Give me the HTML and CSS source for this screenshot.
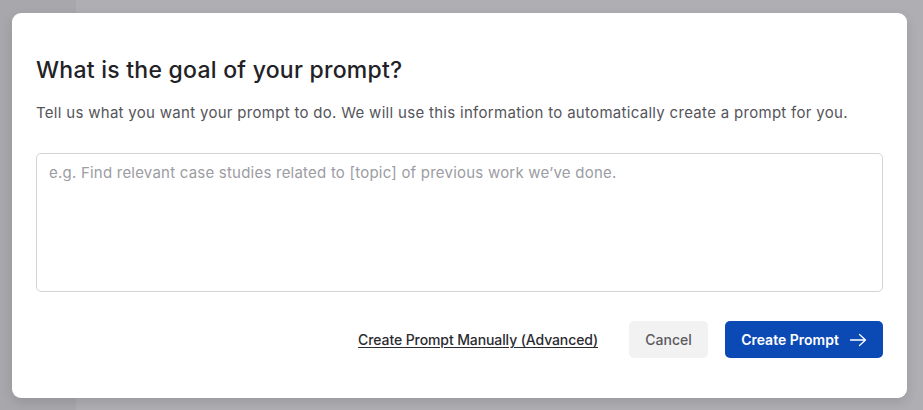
FILE: index.html
```html
<!DOCTYPE html>
<html>
<head>
<meta charset="utf-8">
<link rel="stylesheet" href="styles.css">
</head>
<body>
<div class="modal">
  <h1 class="title">What is the goal of your prompt?</h1>
  <p class="subtitle">Tell us what you want your prompt to do. We will use this information to automatically create a prompt for you.</p>
  <textarea class="goal" placeholder="e.g. Find relevant case studies related to [topic] of previous work we’ve done."></textarea>
  <div class="actions">
    <a class="manual" href="#">Create Prompt Manually (Advanced)</a>
    <button class="btn cancel">Cancel</button>
    <button class="btn primary">Create Prompt
      <svg class="arrow" width="18" height="14" viewBox="0 0 18 14" fill="none" stroke="#fff" stroke-width="1.3" stroke-linecap="round" stroke-linejoin="round"><path d="M1.5 7h15M10.5 1.5l6 5.5-6 5.5"/></svg>
    </button>
  </div>
</div>
</body>
</html>
```
FILE: styles.css
```css
html, body {
  margin: 0;
  height: 100%;
}
body {
  background: linear-gradient(to right, #a8a7ac 0, #a8a7ac 76px, #afaeb3 76px);
  font-family: Inter, "Noto Sans", sans-serif;
  padding: 13px 16px 0 12px;
  box-sizing: border-box;
}
.modal {
  width: 895px;
  height: 385px;
  box-sizing: border-box;
  background: #fff;
  border-radius: 9px;
  box-shadow: 0 4px 12px rgba(0,0,0,0.12);
  padding: 42px 24px 40px 24px;
  display: flex;
  flex-direction: column;
}
.title {
  margin: 0;
  font-size: 23px;
  font-weight: 500;
  color: #222226;
  line-height: 30px;
  letter-spacing: 0.25px;
}
.subtitle {
  margin: 16px 0 0 0;
  font-size: 15px;
  color: #55555b;
  line-height: 24px;
  letter-spacing: 0.3px;
}
.goal {
  margin-top: 28px;
  height: 139px;
  box-sizing: border-box;
  border: 1px solid #d4d4d8;
  border-radius: 5px;
  padding: 8px 12px;
  font-family: inherit;
  font-size: 15px;
  line-height: 22px;
  letter-spacing: 0.22px;
  resize: none;
  outline: none;
}
.goal::placeholder {
  color: #9c9ca3;
}
.actions {
  margin-top: 29px;
  display: flex;
  justify-content: flex-end;
  align-items: center;
}
.manual {
  font-size: 14px;
  font-weight: 500;
  color: #2b2b30;
  text-decoration: underline;
  text-underline-offset: 2px;
  letter-spacing: -0.1px;
  margin-right: 31px;
}
.btn {
  height: 37px;
  border: none;
  border-radius: 5px;
  font-family: inherit;
  font-size: 14px;
  font-weight: 500;
  display: flex;
  align-items: center;
  justify-content: center;
}
.cancel {
  width: 79px;
  background: #f2f2f3;
  color: #5a5a60;
  margin-right: 17px;
}
.primary {
  width: 158px;
  background: #0b4ab4;
  color: #fff;
  font-weight: 600;
  gap: 10px;
}
```
